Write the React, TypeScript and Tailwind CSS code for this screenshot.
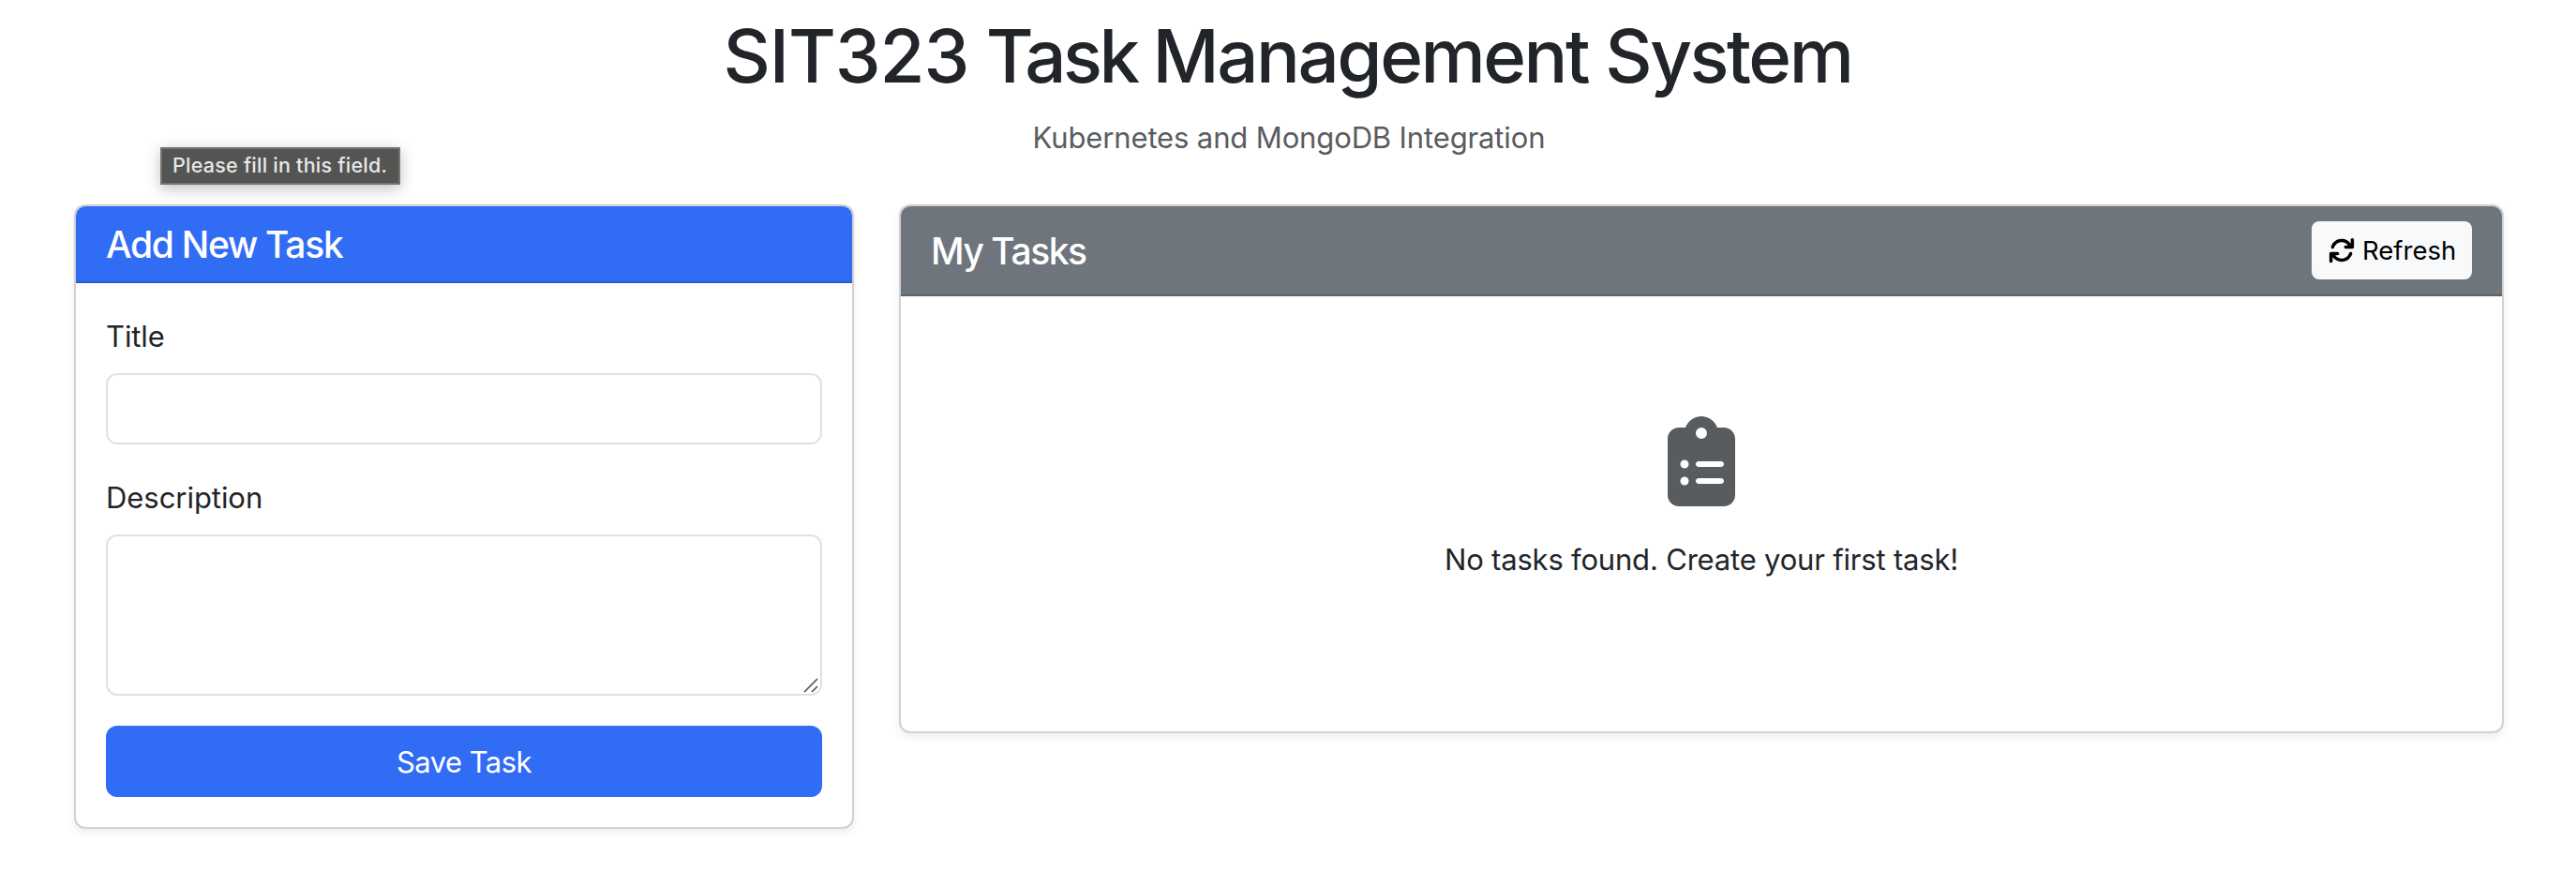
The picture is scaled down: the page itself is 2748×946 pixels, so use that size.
import React from "react";
import { FaClipboardList } from "react-icons/fa6";

const card =
  "overflow-hidden rounded-[12px] border-2 border-[#d1d1d2] bg-white shadow-[0_4px_8px_rgba(0,0,0,0.075)]";

function RefreshIcon() {
  return (
    <svg className="mr-[8px] size-[28px] shrink-0" viewBox="0 0 512 512" fill="currentColor">
      <path d="M464 16c-17.67 0-32 14.31-32 32v74.09C392.1 66.52 327.4 32 256 32C161.5 32 78.59 92.34 49.58 182.2c-5.438 16.81 3.797 34.88 20.61 40.28c16.89 5.5 34.88-3.812 40.3-20.59C130.9 138.5 189.4 96 256 96c50.5 0 96.26 24.55 124.4 64H336c-17.67 0-32 14.31-32 32s14.33 32 32 32h128c17.67 0 32-14.31 32-32V48C496 30.31 481.7 16 464 16zM441.8 289.6c-16.92-5.438-34.88 3.812-40.3 20.59C381.1 373.5 322.6 416 256 416c-50.5 0-96.25-24.55-124.4-64H176c17.67 0 32-14.31 32-32s-14.33-32-32-32h-128c-17.67 0-32 14.31-32 32v144c0 17.69 14.33 32 32 32s32-14.31 32-32v-74.09C119.9 445.5 184.6 480 255.1 480c94.45 0 177.4-60.34 206.4-150.2C467.9 313 458.6 294.1 441.8 289.6z" />
    </svg>
  );
}

function Header() {
  return (
    <header className="text-center">
      <h1 className="pr-[3px] text-[78px] font-medium leading-[95px] tracking-[-2.5px]">
        <span className="tracking-[-1.1px]">SIT323</span> <span className="tracking-[-3.6px]">Task </span>
        Management System
      </h1>
      <p className="mt-[15px] text-[31px] leading-[49px] tracking-[-0.13px] text-[#595c5f]">
        Kubernetes and MongoDB Integration
      </p>
    </header>
  );
}

function TaskForm() {
  return (
    <section className={`${card} w-[832px]`}>
      <div className="h-[82px] border-b-2 border-[#2a5bcb] bg-[#316cf4] px-8 pt-4 text-white">
        <h2 className="h-[48px] text-[39px] font-[550] leading-[49px] tracking-[-1.3px]">Add New Task</h2>
      </div>
      <form className="flex flex-col p-8">
        <label className="mb-4 h-[48px] text-[31px] leading-[49px] tracking-[-0.1px]">Title</label>
        <input className="mb-8 h-[76px] rounded-[12px] border-2 border-[#dee2e6] outline-none" />
        <label className="mb-4 h-[48px] text-[31px] leading-[49px] tracking-[-0.05px]">Description</label>
        <div className="mb-8 flex h-[172px] items-end justify-end rounded-[12px] border-2 border-[#dee2e6] pr-[2px] pb-[1px]">
          <svg width="16" height="16" viewBox="0 0 16 16" fill="none" stroke="#535353" strokeWidth="1.7">
            <path d="M1 15 15 1M9 15l6-6" />
          </svg>
        </div>
        <button
          type="button"
          className="h-[76px] rounded-[12px] bg-[#316cf4] text-center text-[31px] leading-[77px] tracking-[-0.558px] text-white"
        >
          Save Task
        </button>
      </form>
    </section>
  );
}

function TaskList() {
  return (
    <section className={`${card} h-[564px] w-[1712px]`}>
      <div className="flex h-[96px] items-center justify-between border-b-2 border-[#5c6169] bg-[#6e757c] px-8 text-white">
        <h2 className="h-[48px] text-[39px] font-[550] leading-[49px] tracking-[-1.45px]">My Tasks</h2>
        <button
          type="button"
          className="flex h-[62px] w-[171px] items-center rounded-[8px] bg-[#f8f9fb] pl-[18px] text-[27.5px] leading-[62px] text-black"
        >
          <RefreshIcon />
          Refresh
        </button>
      </div>
      <div className="flex flex-col items-center pt-[128px]">
        <FaClipboardList className="h-[96px] w-[72px] text-[#595c5f]" />
        <p className="mt-8 text-[31px] leading-[49px] tracking-[-0.19px]">No tasks found. Create your first task!</p>
      </div>
    </section>
  );
}

export default function App() {
  return (
    <div className="relative h-[946px] overflow-hidden bg-white pt-3 pl-[55px] font-[Inter,sans-serif] text-[#212529]">
      <div className="w-[2640px]">
        <Header />
        <main className="mt-[47px] flex items-start gap-12 pl-6">
          <TaskForm />
          <TaskList />
        </main>
      </div>
      <div className="absolute top-[157px] left-[171px] h-[40px] w-[256px] border-2 border-[#737373] bg-[#535553] pl-[11px] text-[21.5px] font-medium leading-[34px] tracking-[0.24px] whitespace-nowrap text-[#e8e8e8] shadow-[0_4px_16px_rgba(0,0,0,0.25)]">
        Please fill in this field.
      </div>
    </div>
  );
}
